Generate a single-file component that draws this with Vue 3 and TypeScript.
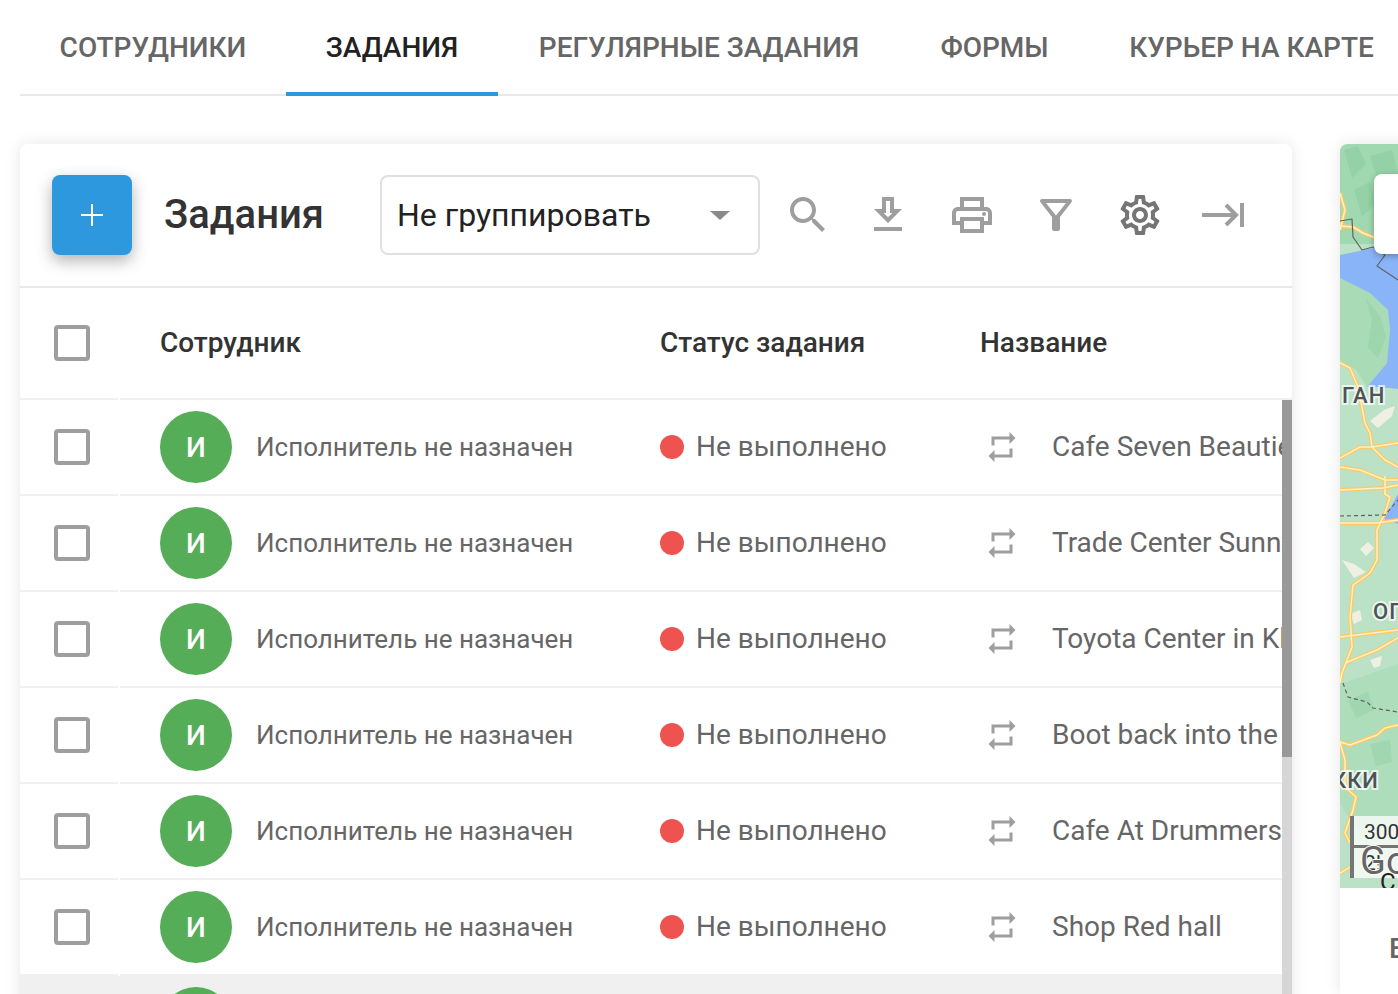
<script setup lang="ts">
const tabs = ['Сотрудники', 'Задания', 'Регулярные задания', 'Формы', 'Курьер на карте']

const tasks = [
  'Cafe Seven Beauties',
  'Trade Center Sunny',
  'Toyota Center in Klin',
  'Boot back into the game',
  'Cafe At Drummers',
  'Shop Red hall',
  'Cafe Green Park',
]

const roads = [
  'M0 219 L10 224 L18 243 L25 279 L30 289 L32 303 L58 299',
  'M0 314 L20 303 L32 303 L45 316 L58 323',
  'M0 323 L20 326 L45 336 L58 336',
  'M0 346 L43 344 L58 341',
  'M45 332 L45 350 L50 353 L45 369 L37 386 L37 416 L30 429 L13 441 L10 473 L12 503 L2 529 L0 539',
  'M0 379 L37 379 L58 376',
  'M0 49 L5 66 L0 86',
  'M0 82 L13 83 L23 89 L33 93 L58 92',
  'M0 493 L58 486',
  'M5 519 L37 506 L58 494',
  'M0 598 L10 601 L37 591 L45 584 L58 581',
  'M0 599 L5 616 L5 643 L16 653 L13 666 L5 689 L10 699',
  'M0 729 L10 723',
]
</script>

<template>
  <div class="page">
    <nav class="tabs">
      <div v-for="(tab, i) in tabs" :key="tab" class="tab" :class="{ active: i === 1 }">{{ tab }}</div>
    </nav>

    <div class="content">
      <section class="card">
        <header class="toolbar">
          <button class="add">
            <svg width="22" height="22" viewBox="0 0 22 22"><path d="M10 0h2v10h10v2H12v10h-2V12H0v-2h10z" fill="#fff" /></svg>
          </button>
          <h1 class="title">Задания</h1>
          <div class="select">
            <span>Не группировать</span>
            <i class="caret"></i>
          </div>
          <div class="icons">
            <svg class="icon" viewBox="-2 0 24 24"><path d="M15.5 14h-.79l-.28-.27C15.41 12.59 16 11.11 16 9.5 16 5.91 13.09 3 9.5 3S3 5.91 3 9.5 5.91 16 9.5 16c1.61 0 3.09-.59 4.23-1.57l.27.28v.79l5 4.99L20.49 19l-4.99-5zm-6 0C7.01 14 5 11.99 5 9.5S7.01 5 9.5 5 14 7.01 14 9.5 11.99 14 9.5 14z" /></svg>
            <svg class="icon" viewBox="0 0 24 24"><path d="M19 9h-4V3H9v6H5l7 7 7-7zm-8 2V5h2v6h1.17L12 13.17 9.83 11H11zm-6 7h14v2H5z" /></svg>
            <svg class="icon" viewBox="0 0 24 24"><path d="M19 8h-1V3H6v5H5c-1.66 0-3 1.34-3 3v6h4v4h12v-4h4v-6c0-1.66-1.34-3-3-3zM8 5h8v3H8V5zm8 12v2H8v-4h8v2zm2-2v-2H6v2H4v-4c0-.55.45-1 1-1h14c.55 0 1 .45 1 1v4h-2z" /><circle cx="18" cy="11.5" r="1" /></svg>
            <svg class="icon" viewBox="0 0 24 24"><path d="M7 6h10l-5.01 6.3L7 6zm-2.75-.39C6.27 8.2 10 13 10 13v6c0 .55.45 1 1 1h2c.55 0 1-.45 1-1v-6s3.73-4.8 5.75-7.39C20.26 4.95 19.79 4 18.95 4H5.04c-.83 0-1.3.95-.79 1.61z" /></svg>
            <svg class="icon gear" viewBox="0 0 24 24"><path d="M19.43 12.98c.04-.32.07-.64.07-.98 0-.34-.03-.66-.07-.98l2.11-1.65c.19-.15.24-.42.12-.64l-2-3.46c-.09-.16-.26-.25-.44-.25-.06 0-.12.01-.17.03l-2.49 1c-.52-.4-1.08-.73-1.69-.98l-.38-2.65C14.46 2.18 14.25 2 14 2h-4c-.25 0-.46.18-.49.42l-.38 2.65c-.61.25-1.17.59-1.69.98l-2.49-1c-.06-.02-.12-.03-.18-.03-.17 0-.34.09-.43.25l-2 3.46c-.13.22-.07.49.12.64l2.11 1.65c-.04.32-.07.65-.07.98 0 .33.03.66.07.98l-2.11 1.65c-.19.15-.24.42-.12.64l2 3.46c.09.16.26.25.44.25.06 0 .12-.01.17-.03l2.49-1c.52.4 1.08.73 1.69.98l.38 2.65c.03.24.24.42.49.42h4c.25 0 .46-.18.49-.42l.38-2.65c.61-.25 1.17-.59 1.69-.98l2.49 1c.06.02.12.03.18.03.17 0 .34-.09.43-.25l2-3.46c.12-.22.07-.49-.12-.64l-2.11-1.65zm-1.98-1.71c.04.31.05.52.05.73 0 .21-.02.43-.05.73l-.14 1.13.89.7 1.08.84-.7 1.21-1.27-.51-1.04-.42-.9.68c-.43.32-.84.56-1.25.73l-1.06.43-.16 1.13-.2 1.35h-1.4l-.19-1.35-.16-1.13-1.06-.43c-.43-.18-.83-.41-1.23-.71l-.91-.7-1.06.43-1.27.51-.7-1.21 1.08-.84.89-.7-.14-1.13c-.03-.31-.05-.54-.05-.74s.02-.43.05-.73l.14-1.13-.89-.7-1.08-.84.7-1.21 1.27.51 1.04.42.9-.68c.43-.32.84-.56 1.25-.73l1.06-.43.16-1.13.2-1.35h1.39l.19 1.35.16 1.13 1.06.43c.43.18.83.41 1.23.71l.91.7 1.06-.43 1.27-.51.7 1.21-1.07.85-.89.7.14 1.13zM12 8c-2.21 0-4 1.79-4 4s1.79 4 4 4 4-1.79 4-4-1.79-4-4-4zm0 6c-1.1 0-2-.9-2-2s.9-2 2-2 2 .9 2 2-.9 2-2 2z" /></svg>
            <svg class="icon" viewBox="0 0 48 48"><path d="M2 24H36M26 14L36 24L26 34" fill="none" stroke="#9e9e9e" stroke-width="4" /><rect x="40" y="12" width="4" height="24" /></svg>
          </div>
        </header>

        <div class="head row-grid">
          <div class="cell check"><span class="box"></span></div>
          <div class="cell th">Сотрудник</div>
          <div class="cell th">Статус задания</div>
          <div class="cell th">Название</div>
        </div>

        <div class="body">
          <div v-for="(name, i) in tasks" :key="name" class="row-grid row" :class="{ hover: i === 6 }">
            <div class="cell check"><span class="box"></span></div>
            <div class="cell person">
              <span class="avatar">И</span>
              <span>Исполнитель не назначен</span>
            </div>
            <div class="cell status">
              <i class="dot"></i>
              <span class="label">Не выполнено</span>
            </div>
            <div class="cell task">
              <svg class="repeat" viewBox="0 0 24 24"><path d="M7 7h10v3l4-4-4-4v3H5v6h2V7zm10 10H7v-3l-4 4 4 4v-3h12v-6h-2v4z" /></svg>
              <span class="label">{{ name }}</span>
            </div>
          </div>
          <div class="scrollbar"><div class="thumb"></div></div>
        </div>
      </section>

      <aside class="side">
        <div class="map">
          <svg class="map-svg" width="58" height="744" viewBox="0 0 58 744">
            <rect width="58" height="744" fill="#bbe2c6" />
            <path d="M0 0H58V100L0 100Z" fill="#a0d8b0" />
            <path d="M4 6L18 2L26 20L12 34ZM30 12L52 6L58 30L40 44ZM14 46L30 38L36 60L22 72ZM40 56L58 50V78L46 84Z" fill="#8fcfa3" opacity=".7" />
            <path d="M0 134L30 149L48 166L50 186L47 219L27 243L58 245V440L0 440Z" fill="#bbe2c6" />
            <path d="M0 134L30 149L48 166L50 186L47 219L27 243L16 226L0 216Z" fill="#a8dbb6" />
            <path d="M26 154L40 172L46 192L38 214L28 204L32 176Z" fill="#94d2a5" opacity=".55" />
            <path d="M0 540L58 520V680L20 690L0 660Z" fill="#aeddbb" />
            <path d="M8 556L28 548L34 566L16 574ZM30 600L50 596L52 618L36 622Z" fill="#94d2a5" opacity=".5" />
            <path d="M0 111L34 104L58 90V245L40 243L27 243L47 219L50 186L48 166L30 149L0 134Z" fill="#8ab4f8" />
            <path d="M58 350L44 375L58 380Z" fill="#8ab4f8" />
            <path d="M30 277L44 266L55 262L52 272L38 284ZM20 405L28 398L34 404L26 412ZM2 416L14 420L26 428L14 434ZM10 470L20 466L22 476L14 480ZM30 516L42 512L40 522L34 524Z" fill="#eef0e4" />
            <g fill="none" stroke-linejoin="round">
              <path v-for="d in roads" :key="d" :d="d" stroke="#fcc963" stroke-width="4" />
              <path v-for="d in roads" :key="d + 'i'" :d="d" stroke="#fef1c8" stroke-width="1.5" />
              <path d="M0 77L12 75L13 93L22 106L33 103L45 111L37 122L58 136" stroke="#5f6368" stroke-width="1.2" />
              <path d="M0 372L45 371L58 356M3 539L8 553L27 558L33 564L58 568" stroke="#5f6368" stroke-width="1.2" stroke-dasharray="4 3" />
            </g>
            <g class="map-label">
              <text x="2" y="259" letter-spacing="2.5">ГАН</text>
              <text x="33" y="475">ОГ</text>
              <text x="-8" y="644">ККИ</text>
            </g>
            <rect x="10" y="672" width="48" height="62" fill="#fff" opacity=".75" />
            <rect x="10" y="672" width="4" height="62" fill="#757575" />
            <rect x="14" y="701" width="44" height="3" fill="#757575" />
            <text class="scale" x="24" y="695">300</text>
            <text class="scale" x="24" y="726">2!</text>
            <text class="logo" x="20" y="730">Go</text>
            <text class="logo-dark" x="40" y="746">C</text>
          </svg>
          <div class="map-control"></div>
        </div>
        <div class="side-text">Ещё</div>
      </aside>
    </div>
  </div>
</template>

<style scoped>
.page {
  width: 1398px;
  height: 994px;
  overflow: hidden;
  font-family: Roboto, "Noto Sans", sans-serif;
  background: #fff;
}

.tabs {
  display: grid;
  grid-template-columns: 266px 212px 402px 189px 325px;
  margin-left: 20px;
  height: 96px;
  width: 1500px;
  border-bottom: 2px solid #e8e8e8;
  box-sizing: border-box;
}

.tab {
  height: 96px;
  box-sizing: border-box;
  font-size: 28px;
  font-weight: 500;
  line-height: 96px;
  text-align: center;
  text-transform: uppercase;
  color: #666;
  white-space: nowrap;
}

.tab.active {
  color: #222;
  border-bottom: 4px solid #2d98de;
}

.content {
  display: flex;
  align-items: flex-start;
  gap: 48px;
  margin: 48px 0 0 20px;
}

.card {
  flex: none;
  width: 1272px;
  background: #fff;
  border-radius: 8px 8px 0 0;
  box-shadow: 0 0 16px rgba(0, 0, 0, 0.1);
}

.toolbar {
  display: flex;
  align-items: center;
  height: 142px;
  padding: 0 0 0 32px;
}

.add {
  flex: none;
  display: flex;
  align-items: center;
  justify-content: center;
  width: 80px;
  height: 80px;
  padding: 0;
  border: none;
  border-radius: 8px;
  background: #2d98de;
  box-shadow: 0 6px 16px rgba(0, 0, 0, 0.3);
}

.title {
  width: 216px;
  margin: 0 0 2px 32px;
  font-size: 40px;
  font-weight: 500;
  color: #333;
}

.select {
  flex: none;
  display: flex;
  align-items: center;
  justify-content: space-between;
  width: 380px;
  height: 80px;
  padding: 0 28px 0 15px;
  box-sizing: border-box;
  border: 2px solid #e0e0e0;
  border-radius: 8px;
  font-size: 32px;
  color: #222;
}

.caret {
  width: 0;
  height: 0;
  border-left: 10px solid transparent;
  border-right: 10px solid transparent;
  border-top: 9px solid #8a8a8a;
}

.icons {
  display: flex;
  gap: 36px;
  margin-left: 20px;
}

.icon {
  flex: none;
  width: 48px;
  height: 48px;
  fill: #9e9e9e;
}

.icon.gear {
  fill: #757575;
}

.row-grid {
  display: grid;
  grid-template-columns: 100px 500px 320px 352px;
}

.head {
  height: 114px;
  border-top: 2px solid #e8e8e8;
  box-sizing: border-box;
}

.cell {
  display: flex;
  align-items: center;
  border-bottom: 2px solid #f0f0f0;
  padding-left: 40px;
  box-sizing: border-box;
  min-width: 0;
  white-space: nowrap;
}

.cell.check {
  padding-left: 34px;
  margin-right: 2px;
}

.th {
  padding-bottom: 2px;
  font-size: 28px;
  font-weight: 500;
  color: #333;
}

.box {
  width: 36px;
  height: 36px;
  box-sizing: border-box;
  border: 4px solid #9e9e9e;
  border-radius: 4px;
}

.body {
  position: relative;
}

.row {
  height: 96px;
  font-size: 28px;
  color: #666;
}

.row.hover {
  background: #f0f0f0;
}

.label {
  margin-bottom: 2px;
}

.person {
  gap: 24px;
  font-size: 26px;
}

.avatar {
  flex: none;
  display: flex;
  align-items: center;
  justify-content: center;
  width: 72px;
  height: 72px;
  border-radius: 50%;
  background: #56ad58;
  color: #fff;
  font-size: 28px;
  font-weight: 500;
}

.status {
  gap: 12px;
}

.dot {
  flex: none;
  width: 24px;
  height: 24px;
  border-radius: 50%;
  background: #ef5350;
}

.task {
  overflow: hidden;
}

.repeat {
  flex: none;
  width: 36px;
  height: 36px;
  margin: 0 32px 0 4px;
  fill: #9e9e9e;
}

.scrollbar {
  position: absolute;
  top: 0;
  right: 0;
  bottom: 0;
  width: 10px;
  background: #d6d6d6;
}

.thumb {
  height: 357px;
  background: #999;
}

.side {
  flex: none;
  width: 400px;
  height: 850px;
  background: #fff;
  border-radius: 8px 8px 0 0;
  box-shadow: 0 0 16px rgba(0, 0, 0, 0.1);
  overflow: hidden;
}

.map {
  position: relative;
  height: 744px;
  overflow: hidden;
}

.map-svg {
  display: block;
}

.map-label text {
  font-size: 22px;
  font-weight: 500;
  letter-spacing: 1px;
  fill: #4f5358;
  stroke: #fff;
  stroke-width: 4px;
  stroke-opacity: 0.7;
  paint-order: stroke;
}

.scale {
  font-size: 21px;
  fill: #333;
}

.logo {
  font-size: 38px;
  fill: #666;
  stroke: #fff;
  stroke-width: 2px;
  paint-order: stroke;
}

.logo-dark {
  font-size: 24px;
  fill: #222;
}

.map-control {
  position: absolute;
  top: 30px;
  left: 34px;
  width: 300px;
  height: 80px;
  background: #fff;
  border-radius: 8px;
  box-shadow: 0 2px 6px rgba(0, 0, 0, 0.3);
}

.side-text {
  padding: 44px 0 0 49px;
  font-size: 28px;
  font-weight: 500;
  color: #666;
}
</style>

<style>
html,
body {
  margin: 0;
  overflow: hidden;
}
</style>
